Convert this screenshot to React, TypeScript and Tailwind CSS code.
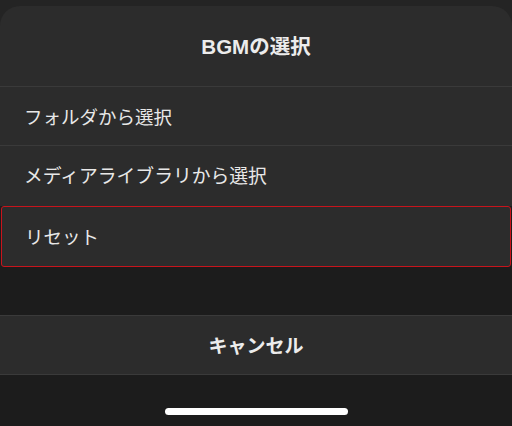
import React from "react";

export default function App() {
  const font = { fontFamily: '"Noto Sans", "Noto Sans CJK JP", sans-serif' };
  return (
    <div className="w-[512px] h-[426px] bg-[#1c1c1c] flex flex-col overflow-hidden" style={font}>
      <div className="bg-[#242424] pt-[6px]">
        <div className="bg-[#2c2c2c] rounded-t-[20px]">
          <div className="h-[81px] pt-[2px] flex items-center justify-center text-[20.5px] font-bold text-[#ececec] border-b border-[#3a3a3a]" style={{ fontFamily: '"Liberation Sans", "Noto Sans CJK JP", sans-serif' }}>
            BGMの選択
          </div>
          <div className="h-[59px] pt-[1px] flex items-center pl-[24px] text-[18.5px] text-[#e8e8e8] border-b border-[#3a3a3a]">
            フォルダから選択
          </div>
          <div className="h-[60px] pt-[1px] flex items-center pl-[24px] text-[18.8px] text-[#e8e8e8]">
            メディアライブラリから選択
          </div>
        </div>
      </div>
      <div className="bg-[#2c2c2c] mx-[1px] h-[61px] flex items-center pl-[23px] text-[18.5px] text-[#e8e8e8] border border-[#c8141c] rounded-[3px]">
        リセット
      </div>
      <div className="h-[48px]" />
      <div className="h-[60px] pt-[2px] bg-[#2c2c2c] border-y border-[#3a3a3a] flex items-center justify-center text-[19px] font-bold text-[#ececec]">
        キャンセル
      </div>
      <div className="flex-1 flex justify-center pt-[33px]">
        <div className="w-[183px] h-[7px] bg-white rounded-full" />
      </div>
    </div>
  );
}
